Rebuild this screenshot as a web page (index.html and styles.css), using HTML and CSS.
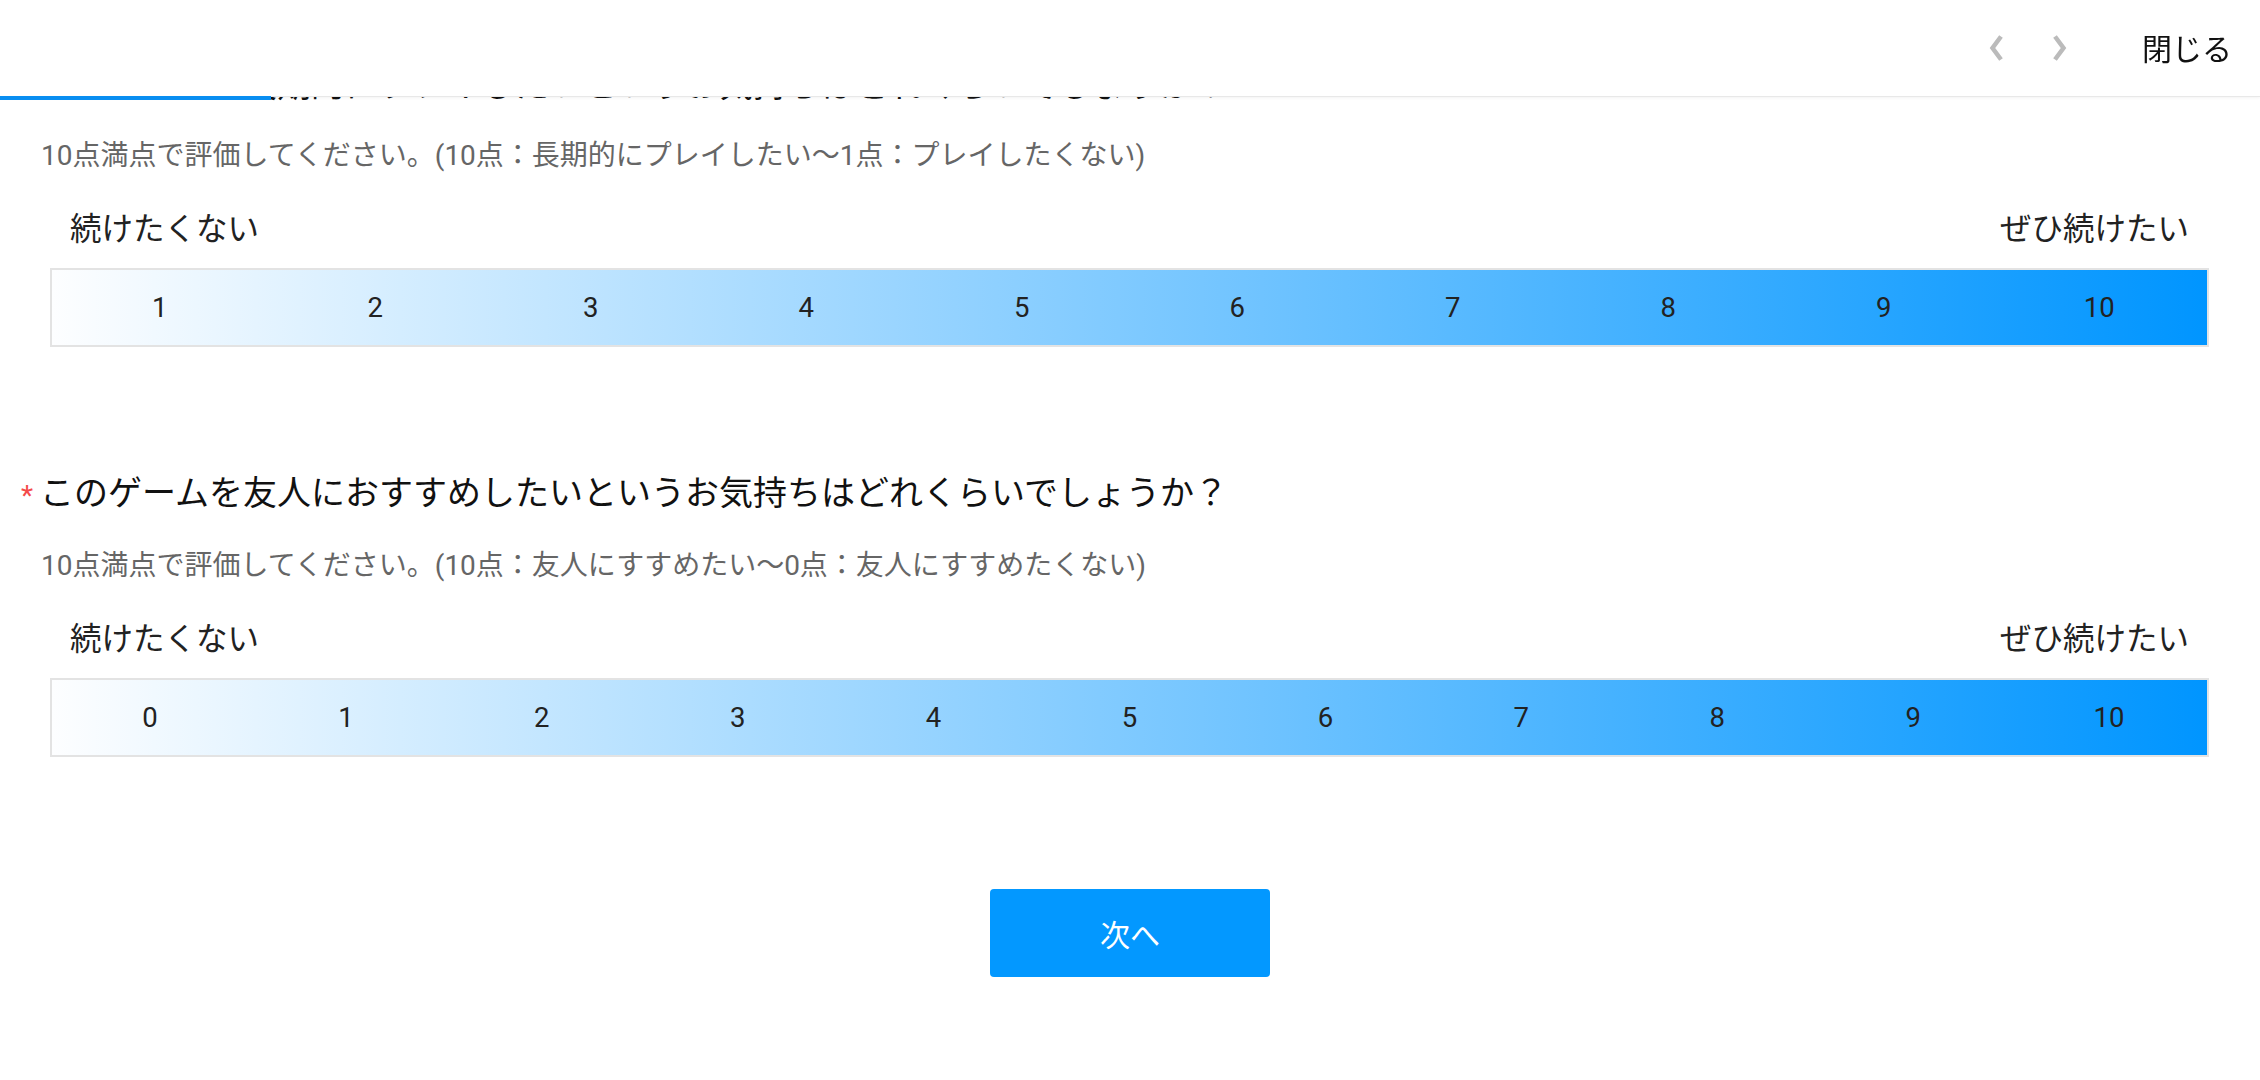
FILE: index.html
```html
<!DOCTYPE html>
<html lang="ja">
<head>
    <meta charset="UTF-8">
    <meta name="viewport" content="width=device-width, initial-scale=1.0">
    <title>アンケート</title>
    <link rel="stylesheet" href="styles.css">
</head>
<body>
    <header class="topbar">
        <button type="button" class="nav-btn" aria-label="前へ">
            <svg width="16" height="26" viewBox="0 0 16 26"><path d="M13 1.5 L4.5 13 L13 24.5" fill="none" stroke="#bbbbbb" stroke-width="4.5"/></svg>
        </button>
        <button type="button" class="nav-btn" aria-label="次へ">
            <svg width="16" height="26" viewBox="0 0 16 26"><path d="M3 1.5 L11.5 13 L3 24.5" fill="none" stroke="#bbbbbb" stroke-width="4.5"/></svg>
        </button>
        <span class="close">閉じる</span>
        <div class="progress"></div> <!-- progress of the survey -->
    </header>

    <main class="survey">
        <section class="item">
            <h2 class="question"><span class="req">*</span>このゲームを長期的にプレイしたいというお気持ちはどれくらいでしょうか？</h2>
            <p class="hint">10点満点で評価してください。(10点：長期的にプレイしたい〜1点：プレイしたくない)</p>
            <div class="ends">
                <span>続けたくない</span>
                <span>ぜひ続けたい</span>
            </div>
            <div class="scale">
                <span>1</span><span>2</span><span>3</span><span>4</span><span>5</span>
                <span>6</span><span>7</span><span>8</span><span>9</span><span>10</span>
            </div>
        </section>

        <section class="item">
            <h2 class="question"><span class="req">*</span>このゲームを友人におすすめしたいというお気持ちはどれくらいでしょうか？</h2>
            <p class="hint">10点満点で評価してください。(10点：友人にすすめたい〜0点：友人にすすめたくない)</p>
            <div class="ends">
                <span>続けたくない</span>
                <span>ぜひ続けたい</span>
            </div>
            <div class="scale">
                <span>0</span><span>1</span><span>2</span><span>3</span><span>4</span><span>5</span>
                <span>6</span><span>7</span><span>8</span><span>9</span><span>10</span>
            </div>
        </section>
    </main>

    <div class="actions">
        <button type="button" class="next">次へ</button>
    </div>
</body>
</html>
```

FILE: styles.css
```css
body, html {
    margin: 0;
    background: #fff;
    font-family: Roboto, "Noto Sans CJK JP", sans-serif;
    color: #222;
}

.topbar {
    position: fixed;
    top: 0;
    left: 0;
    right: 0;
    height: 97px;
    box-sizing: border-box;
    padding-right: 28px;
    background: #fff;
    border-bottom: 1px solid #e8e8e8;
    box-shadow: 0 1px 3px rgba(0, 0, 0, 0.05);
    display: flex;
    align-items: center;
    justify-content: flex-end;
    z-index: 10;
}

.nav-btn {
    border: 0;
    background: none;
    padding: 0;
    margin-right: 48px;
    display: flex;
}

.nav-btn + .nav-btn {
    margin-right: 74px;
}

.close {
    font-size: 30px;
    color: #111;
    padding-bottom: 2px;
}

.progress {
    position: absolute;
    left: 0;
    top: 96px;
    width: 271px;
    height: 4px;
    background: #098ef1;
}

.survey {
    padding: 61px 51px 0 20px;
}

.item + .item {
    margin-top: 122px;
}

.question {
    margin: 0;
    font-size: 34px;
    line-height: 48px;
    font-weight: 400;
    color: #111;
}

.req {
    display: inline-block;
    width: 20px;
    padding-left: 1px;
    box-sizing: border-box;
    font-size: 28px;
    color: #f44a4a;
}

.hint {
    margin: 26px 0 0;
    padding-left: 21px;
    font-size: 28px;
    line-height: 40px;
    color: #666;
}

.item:first-child .hint {
    margin-top: 24px;
}

.ends {
    margin: 32px 0 0 30px;
    padding: 0 20px;
    display: flex;
    justify-content: space-between;
    font-size: 31.5px;
    line-height: 44px;
    color: #222;
}

.scale {
    margin: 16px 0 0 30px;
    height: 79px;
    box-sizing: border-box;
    border: 2px solid #e3e3e3;
    display: flex;
    align-items: center;
    background: linear-gradient(90deg, #fdfeff, #0095ff);
}

.scale span {
    flex: 1;
    text-align: center;
    font-size: 27.5px;
    color: #222;
}

.actions {
    margin-top: 132px;
    display: flex;
    justify-content: center;
}

.next {
    width: 280px;
    height: 88px;
    border: 0;
    border-radius: 4px;
    background: #0398ff;
    color: #fff;
    font-family: Roboto, "Noto Sans CJK JP", sans-serif;
    font-size: 30px;
}
```
